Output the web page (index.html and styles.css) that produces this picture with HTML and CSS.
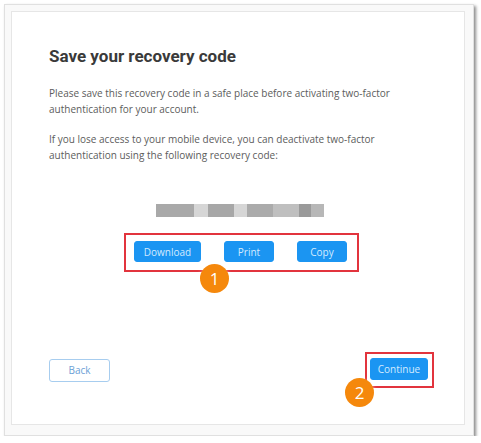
FILE: index.html
```html
<!DOCTYPE html>
<html lang="en">
<head>
<meta charset="utf-8">
<title>Save your recovery code</title>
<link rel="stylesheet" href="styles.css">
</head>
<body>
<div class="frame">
  <div class="panel">
    <h1 class="title">Save your recovery code</h1>
    <p class="text">Please save this recovery code in a safe place before activating two-factor<br>authentication for your account.</p>
    <p class="text text-second">If you lose access to your mobile device, you can deactivate two-factor<br>authentication using the following recovery code:</p>
    <div class="code" aria-label="recovery code (hidden)">
      <span class="seg s1"></span><span class="seg s2"></span><span class="seg s3"></span><span class="seg s4"></span><span class="seg s5"></span><span class="seg s6"></span><span class="seg s7"></span><span class="seg s8"></span>
    </div>
    <div class="actions highlight">
      <button class="btn btn-primary btn-download">Download</button>
      <button class="btn btn-primary btn-small">Print</button>
      <button class="btn btn-primary btn-small">Copy</button>
    </div>
    <div class="footer">
      <button class="btn btn-outline">Back</button>
      <div class="highlight continue-box">
        <button class="btn btn-primary btn-continue">Continue</button>
      </div>
    </div>
  </div>
  <span class="badge badge-1">1</span>
  <span class="badge badge-2">2</span>
</div>
</body>
</html>
```

FILE: styles.css
```css
html, body {
  margin: 0;
  padding: 0;
  background: #ffffff;
}

body {
  font-family: "Open Sans", "Noto Sans", sans-serif;
}

.frame {
  position: relative;
  margin: 4px 0 0 4px;
  width: 455px;
  height: 414px;
  padding: 6px 7px 10px 6px;
  border: 1px solid #e0e0e0;
  background: #f9f9f9;
  box-shadow: 2px 2px 3px rgba(0, 0, 0, 0.45);
}

.panel {
  box-sizing: border-box;
  width: 454px;
  height: 414px;
  border: 1px solid #e6e6e6;
  background: #ffffff;
  padding: 33px 30px 36px 37px;
  display: flex;
  flex-direction: column;
}

.title {
  margin: 0;
  font-family: Roboto, "Liberation Sans", sans-serif;
  font-weight: 700;
  font-size: 17px;
  line-height: 22px;
  color: #3a3a3a;
}

.text {
  margin: 18px 0 0;
  font-size: 10px;
  line-height: 16px;
  color: #5c5c5c;
}

.text-second {
  margin-top: 14px;
}

.code {
  display: flex;
  align-self: center;
  margin: 41px 0 0 -3px;
  height: 13px;
  filter: blur(0.6px);
}

.seg { display: block; height: 13px; }
.s1 { width: 38px; background: #a9a9a9; }
.s2 { width: 14px; background: #d6d6d6; }
.s3 { width: 26px; background: #a7a7a7; }
.s4 { width: 13px; background: #d6d6d6; }
.s5 { width: 26px; background: #ababab; }
.s6 { width: 26px; background: #bfbfbf; }
.s7 { width: 12px; background: #9a9a9a; }
.s8 { width: 13px; background: #b7b7b7; }

.highlight {
  border: 2px solid #e2343d;
}

.actions {
  align-self: center;
  margin-top: 16px;
  display: flex;
  gap: 23px;
  padding: 6px 10px 8px 8px;
}

.btn {
  box-sizing: border-box;
  font-family: "Open Sans", "Noto Sans", sans-serif;
  font-size: 10px;
  border-radius: 3px;
  padding: 0;
  cursor: pointer;
}

.btn-primary {
  background: #1b95f2;
  border: 1px solid #1b95f2;
  color: #d3ebff;
  height: 21px;
}

.btn-download { width: 67px; }
.btn-small { width: 50px; }

.footer {
  margin-top: auto;
  display: flex;
  justify-content: space-between;
  align-items: center;
}

.btn-outline {
  width: 61px;
  height: 23px;
  background: #ffffff;
  border: 1px solid #a7cdef;
  color: #6b9fd6;
}

.continue-box {
  padding: 4px 4px 6px 3px;
  display: flex;
}

.btn-continue {
  width: 58px;
  height: 22px;
}

.badge {
  position: absolute;
  width: 29px;
  height: 29px;
  border-radius: 50%;
  background: #f5880c;
  color: #ffffff;
  font-family: "Open Sans", "Noto Sans", sans-serif;
  font-size: 17px;
  line-height: 29px;
  text-align: center;
  box-shadow: 0 2px 4px rgba(255, 255, 255, 0.9);
}

.badge-1 { left: 195px; top: 259px; }
.badge-2 { left: 340px; top: 373px; }
```
